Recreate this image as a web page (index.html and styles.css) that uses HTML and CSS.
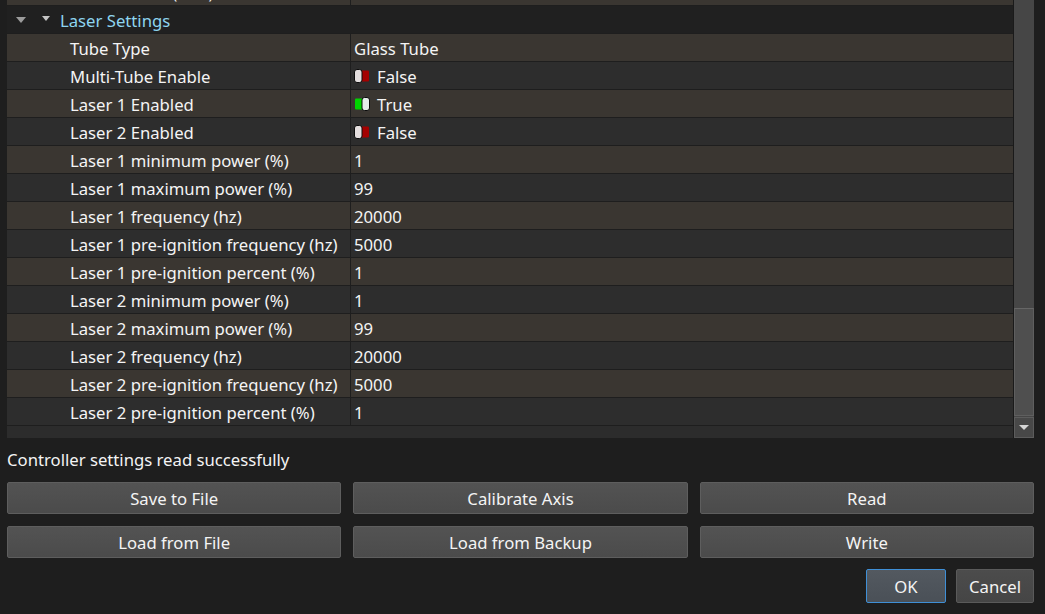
FILE: index.html
```html
<!DOCTYPE html>
<html lang="en">
<head>
  <meta charset="UTF-8" />
  <title>Controller Settings</title>
  <link rel="stylesheet" href="styles.css">
</head>
<body>
  <div class="dialog">
    <div class="grid-frame">
      <div class="grid-view">
        <div class="grid-rows">
          <div class="row alt"><div class="name">Z Axis Offset (mm)</div><div class="value">0</div></div>

          <div class="category">
            <span class="caret big"></span>
            <span class="caret small"></span>
            <span class="cat-title">Laser Settings</span>
          </div>

          <div class="row alt"><div class="name">Tube Type</div><div class="value">Glass Tube</div></div>
          <div class="row"><div class="name">Multi-Tube Enable</div><div class="value">
            <svg class="toggle" width="16" height="14" viewBox="0 0 16 14"><rect x="7" y="1.5" width="8" height="11" rx="1" fill="#a40000"/><rect x="0.5" y="0.5" width="7.5" height="13" rx="2.5" fill="#e4dede" stroke="#0c0c0c"/></svg>False</div></div>
          <div class="row alt"><div class="name">Laser 1 Enabled</div><div class="value">
            <svg class="toggle" width="16" height="14" viewBox="0 0 16 14"><rect x="1" y="1.5" width="8" height="11" rx="1" fill="#00d400"/><rect x="8" y="0.5" width="7.5" height="13" rx="2.5" fill="#e4ecea" stroke="#0c0c0c"/></svg>True</div></div>
          <div class="row"><div class="name">Laser 2 Enabled</div><div class="value">
            <svg class="toggle" width="16" height="14" viewBox="0 0 16 14"><rect x="7" y="1.5" width="8" height="11" rx="1" fill="#a40000"/><rect x="0.5" y="0.5" width="7.5" height="13" rx="2.5" fill="#e4dede" stroke="#0c0c0c"/></svg>False</div></div>
          <div class="row alt"><div class="name">Laser 1 minimum power (%)</div><div class="value">1</div></div>
          <div class="row"><div class="name">Laser 1 maximum power (%)</div><div class="value">99</div></div>
          <div class="row alt"><div class="name">Laser 1 frequency (hz)</div><div class="value">20000</div></div>
          <div class="row"><div class="name">Laser 1 pre-ignition frequency (hz)</div><div class="value">5000</div></div>
          <div class="row alt"><div class="name">Laser 1 pre-ignition percent (%)</div><div class="value">1</div></div>
          <div class="row"><div class="name">Laser 2 minimum power (%)</div><div class="value">1</div></div>
          <div class="row alt"><div class="name">Laser 2 maximum power (%)</div><div class="value">99</div></div>
          <div class="row"><div class="name">Laser 2 frequency (hz)</div><div class="value">20000</div></div>
          <div class="row alt"><div class="name">Laser 2 pre-ignition frequency (hz)</div><div class="value">5000</div></div>
          <div class="row"><div class="name">Laser 2 pre-ignition percent (%)</div><div class="value">1</div></div>
        </div>
      </div>
      <div class="scrollbar">
        <div class="track"><div class="thumb"></div></div>
        <div class="arrow-down"><span></span></div>
      </div>
    </div>

    <div class="status">Controller settings read successfully</div>

    <div class="actions">
      <button>Save to File</button>
      <button>Calibrate Axis</button>
      <button>Read</button>
      <button>Load from File</button>
      <button>Load from Backup</button>
      <button>Write</button>
    </div>

    <div class="footer">
      <button class="ok-button">OK</button>
      <button class="cancel-button">Cancel</button>
    </div>
  </div>
</body>
</html>
```

FILE: styles.css
```css
body {
  margin: 0;
  padding: 0;
  background: #1e1e1e;
  color: #f4f4f4;
  font-family: "Noto Sans", sans-serif;
  font-size: 16.7px;
  overflow: hidden;
}

.dialog {
  height: 614px;
  box-sizing: border-box;
  padding: 0 11px 0 7px;
  display: flex;
  flex-direction: column;
}

/* property grid */
.grid-frame {
  display: flex;
  height: 438px;
}

.grid-view {
  flex: 1;
  overflow: hidden;
  background: #2c2c2c;
  border-right: 1px solid #1a1a1a;
}

.grid-rows {
  margin-top: -22px;
}

.row {
  display: flex;
  height: 27px;
  border-bottom: 1px solid #1e1e1e;
  background: #2d2d2d;
}

.row.alt {
  background: #3a3631;
}

.row .name {
  width: 344px;
  box-sizing: border-box;
  padding: 1px 0 0 63px;
  border-right: 1px solid #1e1e1e;
  display: flex;
  align-items: center;
  white-space: nowrap;
}

.row .value {
  padding: 1px 0 0 3px;
  display: flex;
  align-items: center;
  gap: 7px;
}

.toggle {
  display: block;
  margin-top: -1px;
}

.category {
  height: 27px;
  border-bottom: 1px solid #1e1e1e;
  background: #202020;
  display: flex;
  align-items: center;
}

.caret {
  width: 0;
  height: 0;
}

.caret.big {
  margin-left: 9px;
  border-left: 5.5px solid transparent;
  border-right: 5.5px solid transparent;
  border-top: 6px solid #9c9c9c;
}

.caret.small {
  margin-left: 16px;
  border-left: 4.5px solid transparent;
  border-right: 4.5px solid transparent;
  border-top: 5px solid #c4c4c4;
  margin-top: -2px;
}

.cat-title {
  margin-left: 10px;
  padding-top: 2px;
  color: #8ed5ef;
}

/* scrollbar */
.scrollbar {
  width: 20px;
  display: flex;
  flex-direction: column;
  background: #464646;
}

.track {
  flex: 1;
  display: flex;
  flex-direction: column;
  justify-content: flex-end;
}

.thumb {
  height: 106px;
  background: #4f4f4f;
  border: 1px solid #5f5f5f;
  border-top-color: #666;
  margin-bottom: 1px;
}

.arrow-down {
  height: 19px;
  background: #484848;
  border: 1px solid #5c5c5c;
  display: flex;
  align-items: center;
  justify-content: center;
}

.arrow-down span {
  width: 0;
  height: 0;
  border-left: 5px solid transparent;
  border-right: 5px solid transparent;
  border-top: 5px solid #d6d6d6;
}

.status {
  margin-top: 11px;
  line-height: 22px;
}

/* buttons */
.actions {
  margin-top: 11px;
  display: grid;
  grid-template-columns: 1fr 1fr 1fr;
  gap: 12px;
}

button {
  font-family: "Noto Sans", sans-serif;
  font-size: 16.7px;
  color: #f4f4f4;
  background: linear-gradient(#535353, #4b4b4b);
  border: 1px solid #5e5e5e;
  border-radius: 2px;
  padding: 0;
}

.actions button {
  height: 32px;
}

.footer {
  margin-top: 11px;
  display: flex;
  justify-content: flex-end;
  gap: 10px;
}

.footer button {
  height: 34px;
}

.ok-button {
  width: 80px;
  background: linear-gradient(#535960, #4a5057);
  border-color: #3f8fd6;
}

.cancel-button {
  width: 78px;
  background: linear-gradient(#4c4c4c, #454545);
  border-color: #5a5a5a;
}
```
